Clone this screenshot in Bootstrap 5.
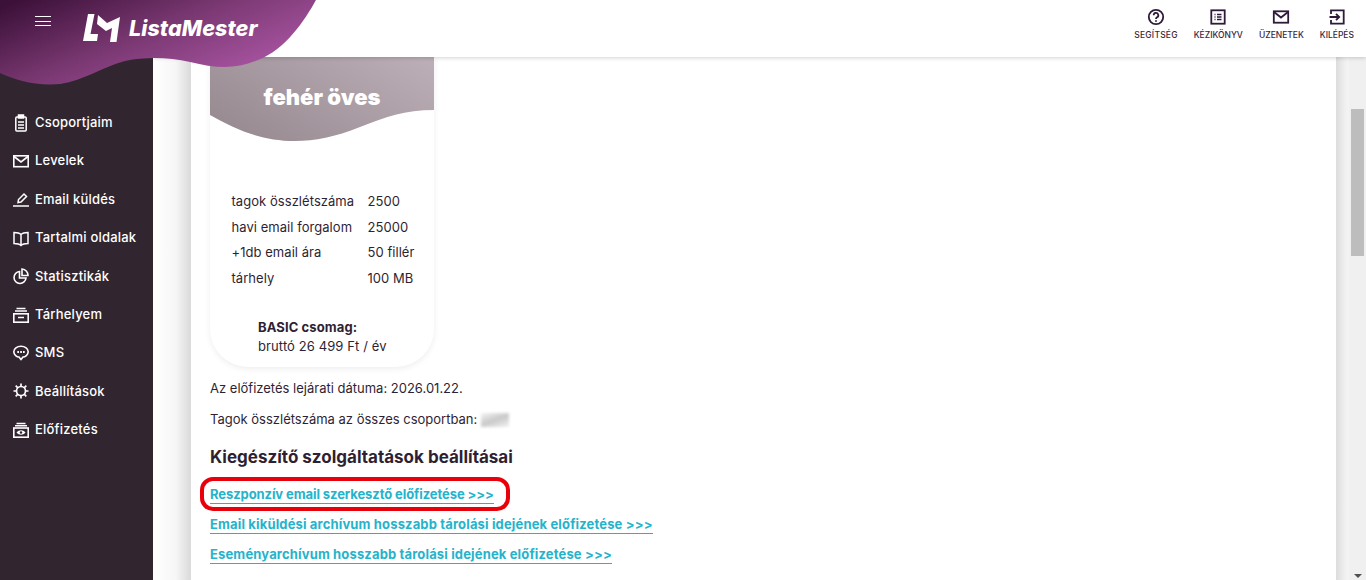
<!DOCTYPE html>
<html lang="hu">
  <head>
    <meta charset="UTF-8" />
    <title>ListaMester</title>
    <link href="https://cdn.jsdelivr.net/npm/bootstrap@5.3.0/dist/css/bootstrap.min.css" rel="stylesheet" />
    <style>
      html, body { height: 100%; overflow: hidden; }
      body { font-family: "Inter", "Liberation Sans", sans-serif; background: #fff; color: #2f1f33; font-size: 13px; }
      .app-shell { height: 580px; }
      .side-menu { width: 153px; background: #312630; padding-top: 103.5px; flex: none; }
      .side-link { color: #fff; text-decoration: none; height: 38.4px; padding-left: 13px; font-size: 13px; font-weight: 500; gap: 6px; letter-spacing: .2px; }
      .side-link svg { width: 16px; height: 18px; flex: none; }
      .top-strip { height: 57px; background: #fff; box-shadow: 0 1px 4px rgba(0,0,0,.18); position: relative; z-index: 2; padding-right: 12px; gap: 16px; flex: none; }
      .top-item { color: #3b1f3d; text-decoration: none; font-size: 8.5px; font-weight: 500; line-height: 11px; gap: 4px; }
      .top-item svg { width: 18px; height: 18px; }
      .top-item-wide { letter-spacing: .2px; }
      .header-blob { position: absolute; left: 0; top: 0; width: 320px; height: 86px; z-index: 3; }
      .brand-block { position: absolute; left: 35px; top: 14px; z-index: 4; gap: 32px; }
      .burger { width: 16px; height: 10px; border-top: 1px solid #fff; border-bottom: 1px solid #fff; position: relative; margin-top: 2px; }
      .burger::after { content: ""; position: absolute; left: 0; right: 0; top: 3.5px; border-top: 1px solid #fff; }
      .brand-name { color: #fff; font-size: 21.5px; font-weight: 800; font-style: italic; letter-spacing: .1px; line-height: 28px; margin-left: 8px; }
      .gutter-left { width: 38px; flex: none; background: linear-gradient(to right, #fff, #f6f6f6 60%, #dadada); }
      .gutter-right { width: 13px; flex: none; background: linear-gradient(to right, #dcdcdc, #f0f0f0 70%, #f4f4f4); }
      .sheet { background: #fff; flex: 1; padding: 0 19px; min-width: 0; }
      .scroll-rail { width: 17px; flex: none; background: #f0f0f0; position: relative; }
      .scroll-thumb { width: 13px; height: 147px; margin: 52px 0 0 2px; background: #bdbdbd; }
      .scroll-arrow { position: absolute; left: 5px; bottom: 2px; border: 4px solid transparent; border-top: 4px solid #505050; border-bottom: 0; }
      .plan-card { width: 224px; height: 310px; border-radius: 0 0 38px 38px; box-shadow: 0 2px 6px rgba(0,0,0,.07); position: relative; }
      .plan-wave { display: block; width: 224px; height: 86px; }
      .plan-title { position: absolute; left: 0; right: 0; top: 26px; text-align: center; color: #fff; font-size: 22px; font-weight: 900; line-height: 28px; margin: 0; }
      .plan-table { position: absolute; left: 21.500px; top: 132px; font-size: 13px; letter-spacing: .05px; }
      .plan-row { height: 25.500px; align-items: center; }
      .plan-key { width: 136px; }
      .plan-price { position: absolute; left: 48px; top: 261px; line-height: 19px; font-size: 13px; letter-spacing: .1px; }
      .info-line { margin: 11px 0 0; font-size: 13px; line-height: 20px; }
      .blur-num { display: inline-block; width: 28px; height: 14px; background: linear-gradient(160deg, #f4f4f4, #c9c9c9 50%, #f2f2f2); filter: blur(1.500px); vertical-align: middle; }
      .sub-title { font-size: 17px; font-weight: 700; line-height: 22px; margin: 17px 0 16.500px; }
      .link-stack { gap: 12px; }
      .sub-link { color: #25b3cc; font-weight: 700; font-size: 13px; line-height: 17px; text-decoration: none; border-bottom: 1px solid #25b3cc; display: inline-block; letter-spacing: .15px; }
      .sub-link-first { letter-spacing: -.08px; }
      .red-ring { position: absolute; left: -10px; top: -8px; width: 310px; height: 34px; border: 4px solid #e8000b; border-radius: 13px; }
    </style>
  </head>
  <body>
    <div class="app-shell d-flex">
      <!-- oldalsó menü -->
      <nav class="side-menu d-flex flex-column">
        <a class="side-link d-flex align-items-center" href="#">
          <svg viewBox="0 0 16 18" fill="none" stroke="#fff" stroke-width="1.500"><rect x="2.800" y="3" width="10.400" height="14" rx="1"/><rect x="5.500" y="1" width="5" height="3" fill="#fff"/><path d="M5 8h6M5 11h6M5 14h6"/></svg>
          Csoportjaim</a>
        <a class="side-link d-flex align-items-center" href="#">
          <svg viewBox="0 0 16 18" fill="none" stroke="#fff" stroke-width="1.600"><rect x=".8" y="3.800" width="14.400" height="10.900"/><path d="M1 4.500l7 5.500 7-5.500"/></svg>
          Levelek</a>
        <a class="side-link d-flex align-items-center" href="#">
          <svg viewBox="0 0 16 18" fill="none" stroke="#fff" stroke-width="1.500"><path d="M5 12.500l.5-3L11 4l2.500 2.500L8 12z"/><path d="M0 16h16"/></svg>
          Email küldés</a>
        <a class="side-link d-flex align-items-center" href="#">
          <svg viewBox="0 0 16 18" fill="none" stroke="#fff" stroke-width="1.500"><path d="M8 5.500C6 3.500 3 3.500 1 3.500v11c2 0 5 0 7 2 2-2 5-2 7-2v-11c-2 0-5 0-7 2zM8 5.500v11"/></svg>
          Tartalmi oldalak</a>
        <a class="side-link d-flex align-items-center" href="#">
          <svg viewBox="0 0 16 18" fill="none" stroke="#fff" stroke-width="1.600"><path d="M6.500 4.500a6 6 0 1 0 6.500 6.500H6.500z"/><path d="M9 2v6.500h6A6.500 6.500 0 0 0 9 2z"/></svg>
          Statisztikák</a>
        <a class="side-link d-flex align-items-center" href="#">
          <svg viewBox="0 0 16 18" fill="none" stroke="#fff" stroke-width="1.600"><rect x=".8" y="7.800" width="14.400" height="8.400"/><path d="M5 11.500h6M2 5h12M3.500 2.500h9"/></svg>
          Tárhelyem</a>
        <a class="side-link d-flex align-items-center" href="#">
          <svg viewBox="0 0 16 18" fill="none" stroke="#fff" stroke-width="1.600"><path d="M8 2.300c4 0 7.200 2.400 7.200 5.500S12 13 10 13l-2 2.500L6 13C4 13 .8 10.900.8 7.800S4 2.300 8 2.300z"/><path d="M4.300 8h1.700M7.200 8h1.700M10 8h1.700" stroke-width="1.900"/></svg>
          SMS</a>
        <a class="side-link d-flex align-items-center" href="#">
          <svg viewBox="0 0 16 18" fill="none" stroke="#fff" stroke-width="1.700"><circle cx="8" cy="9" r="4.500"/><path d="M8 1.500v3M8 13.500v3M.5 9h3M12.500 9h3M2.700 3.700l2.100 2.100M11.200 12.200l2.100 2.100M2.700 14.300l2.100-2.100M11.200 5.800l2.100-2.100"/></svg>
          Beállítások</a>
        <a class="side-link d-flex align-items-center" href="#">
          <svg viewBox="0 0 16 18" fill="none" stroke="#fff" stroke-width="1.600"><rect x=".8" y="7" width="14.400" height="9.200"/><path d="M2 4.800h12M3.500 2.500h9"/><path d="M3.500 11.500c2.500-3 6.500-3 9 0-2.500 3-6.500 3-9 0z" fill="#fff" stroke="none"/><circle cx="8" cy="11.500" r="1.200" fill="#312630" stroke="none"/></svg>
          Előfizetés</a>
      </nav>

      <div class="flex-grow-1 d-flex flex-column">
        <!-- felső sáv -->
        <header class="top-strip d-flex justify-content-end align-items-start pt-2">
          <a class="top-item top-item-wide d-flex flex-column align-items-center" href="#">
            <svg viewBox="0 0 18 18" fill="none" stroke="#2f1a3a" stroke-width="1.800"><circle cx="9" cy="9" r="7.200"/><path d="M6.700 7.200a2.300 2.300 0 1 1 3.400 2c-.8.500-1.100 1-1.100 1.800"/><path d="M9 12.300v1.500"/></svg>
            SEGÍTSÉG</a>
          <a class="top-item d-flex flex-column align-items-center" href="#">
            <svg viewBox="0 0 18 18" fill="none" stroke="#2f1a3a" stroke-width="1.800"><rect x="2.300" y="2.300" width="13.400" height="13.400"/><path d="M5.500 6.500h1M5.500 9h1M5.500 11.500h1M8 6.500h4.500M8 9h4.500M8 11.500h4.500" stroke-width="1.300"/></svg>
            KÉZIKÖNYV</a>
          <a class="top-item d-flex flex-column align-items-center" href="#">
            <svg viewBox="0 0 18 18" fill="none" stroke="#2f1a3a" stroke-width="1.800"><rect x="1.800" y="3.300" width="14.400" height="11.400"/><path d="M2 4l7 5.500L16 4"/></svg>
            ÜZENETEK</a>
          <a class="top-item d-flex flex-column align-items-center" href="#">
            <svg viewBox="0 0 18 18" fill="none" stroke="#2f1a3a" stroke-width="1.800"><path d="M3 6V2.300h12.700v13.400H3V12"/><path d="M1.500 9h9.500M8 5.800L11.200 9 8 12.200"/></svg>
            KILÉPÉS</a>
        </header>

        <div class="d-flex flex-grow-1">
          <div class="gutter-left"></div>
          <main class="sheet">
            <div class="plan-card">
              <svg class="plan-wave" viewBox="0 0 224 86" preserveAspectRatio="none">
                <defs><linearGradient id="planGrad" x1="0" y1=".7" x2="1" y2=".1"><stop offset="0" stop-color="#988b92"/><stop offset="1" stop-color="#bbaeb6"/></linearGradient></defs>
                <path d="M0 0H224V53C195 53 175 60 150 70C125 80 105 84 85 84C50 84 25 72 0 58Z" fill="url(#planGrad)"/>
              </svg>
              <h3 class="plan-title">fehér öves</h3>
              <div class="plan-table">
                <div class="plan-row d-flex"><span class="plan-key">tagok összlétszáma</span><span>2500</span></div>
                <div class="plan-row d-flex"><span class="plan-key">havi email forgalom</span><span>25000</span></div>
                <div class="plan-row d-flex"><span class="plan-key">+1db email ára</span><span>50 fillér</span></div>
                <div class="plan-row d-flex"><span class="plan-key">tárhely</span><span>100 MB</span></div>
              </div>
              <div class="plan-price"><strong>BASIC csomag:</strong><br />bruttó 26 499 Ft / év</div>
            </div>
            <p class="info-line">Az előfizetés lejárati dátuma: 2026.01.22.</p>
            <p class="info-line">Tagok összlétszáma az összes csoportban: <span class="blur-num"></span></p>
            <h4 class="sub-title">Kiegészítő szolgáltatások beállításai</h4>
            <div class="link-stack d-flex flex-column align-items-start">
              <div class="position-relative"><a class="sub-link sub-link-first" href="#">Reszponzív email szerkesztő előfizetése &gt;&gt;&gt;</a><span class="red-ring"></span></div>
              <a class="sub-link" href="#">Email kiküldési archívum hosszabb tárolási idejének előfizetése &gt;&gt;&gt;</a>
              <a class="sub-link" href="#">Eseményarchívum hosszabb tárolási idejének előfizetése &gt;&gt;&gt;</a>
            </div>
          </main>
          <div class="gutter-right"></div>
          <div class="scroll-rail"><div class="scroll-thumb"></div><span class="scroll-arrow"></span></div>
        </div>
      </div>
    </div>

    <!-- logó a hullámos fejlécben -->
    <svg class="header-blob" viewBox="0 0 320 86" preserveAspectRatio="none">
      <defs><linearGradient id="blobGrad" x1="0" y1=".1" x2=".85" y2=".65"><stop offset="0" stop-color="#3c1139"/><stop offset=".55" stop-color="#7a3872"/><stop offset="1" stop-color="#a2509b"/></linearGradient></defs>
      <path d="M0 0H316C305 20 285 50 258 60C235 70 215 68 190 62C170 58 150 56 125 61C100 68 85 80 60 84C35 86 15 80 0 73Z" fill="url(#blobGrad)"/>
    </svg>
    <div class="brand-block d-flex align-items-start">
      <span class="burger"></span>
      <div class="d-flex align-items-center">
        <svg width="38" height="28" viewBox="0 0 38 28" fill="#fff"><path d="M5 0h6.500L7.500 20H15l-1 7H0z"/><path d="M15 1l9 8 13-6-3.500 25h-6.500l2-14-6 3-9-7z"/></svg>
        <span class="brand-name">ListaMester</span>
      </div>
    </div>
    <script src="https://cdn.jsdelivr.net/npm/bootstrap@5.3.0/dist/js/bootstrap.bundle.min.js"></script>
  </body>
</html>
